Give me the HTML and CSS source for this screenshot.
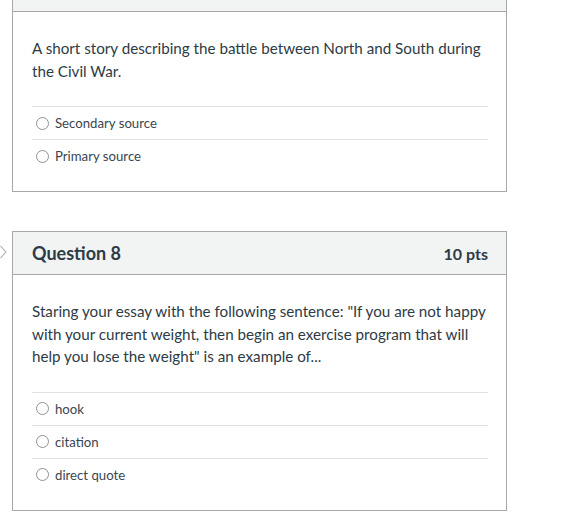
FILE: index.html
```html
<!DOCTYPE html>
<html>
<head>
<meta charset="utf-8">
<link rel="stylesheet" href="styles.css">
</head>
<body>
<div class="page">
  <div class="card card-first">
    <div class="card-header"></div>
    <div class="card-body">
      <p class="q-text">A short story describing the battle between North and South during the Civil War.</p>
      <div class="answers">
        <div class="answer"><span class="radio"></span><span>Secondary source</span></div>
        <div class="answer"><span class="radio"></span><span>Primary source</span></div>
      </div>
    </div>
  </div>
  <div class="card">
    <svg class="flag" width="8" height="14" viewBox="0 0 8 14"><path d="M0.5 1 L6 7 L0.5 13" fill="none" stroke="#b8bcbf" stroke-width="1.2"/></svg>
    <div class="card-header"><span class="q-title">Question 8</span><span class="q-pts">10 pts</span></div>
    <div class="card-body">
      <p class="q-text">Staring your essay with the following sentence: "If you are not happy with your current weight, then begin an exercise program that will help you lose the weight" is an example of...</p>
      <div class="answers">
        <div class="answer"><span class="radio"></span><span>hook</span></div>
        <div class="answer"><span class="radio"></span><span>citation</span></div>
        <div class="answer"><span class="radio"></span><span>direct quote</span></div>
      </div>
    </div>
  </div>
</div>
</body>
</html>
```
FILE: styles.css
```css
html, body {
  margin: 0;
  padding: 0;
  background: #fff;
}
body {
  font-family: Lato, "Open Sans", sans-serif;
  color: #2d3b45;
  overflow: hidden;
}
.page {
  padding-left: 12px;
  width: 495px;
}
.card {
  position: relative;
  border: 1px solid #a8a8a8;
  background: #fff;
  margin-bottom: 39px;
}
.card:last-child {
  margin-bottom: 0;
}
.card-first {
  margin-top: -32px;
}
.flag {
  position: absolute;
  left: -13px;
  top: 13px;
}
.card-header {
  display: flex;
  justify-content: space-between;
  align-items: center;
  height: 42px;
  background: #f2f3f3;
  border-bottom: 1px solid #a8a8a8;
  padding: 0 18px 0 19px;
}
.q-title {
  font-weight: 700;
  font-size: 18px;
}
.q-pts {
  font-weight: 700;
  font-size: 16px;
}
.card-body {
  padding: 25px 18px 19px 19px;
}
.q-text {
  margin: 0 0 24px 0;
  font-size: 15.2px;
  line-height: 22.5px;
}
.answer {
  display: flex;
  align-items: center;
  height: 32px;
  border-top: 1px solid #dfe1e2;
  font-size: 13.2px;
  color: #3a4650;
}
.radio {
  width: 11px;
  height: 11px;
  border: 1px solid #8e9296;
  border-radius: 50%;
  margin: 0 6px 0 4px;
  box-sizing: content-box;
}
```
